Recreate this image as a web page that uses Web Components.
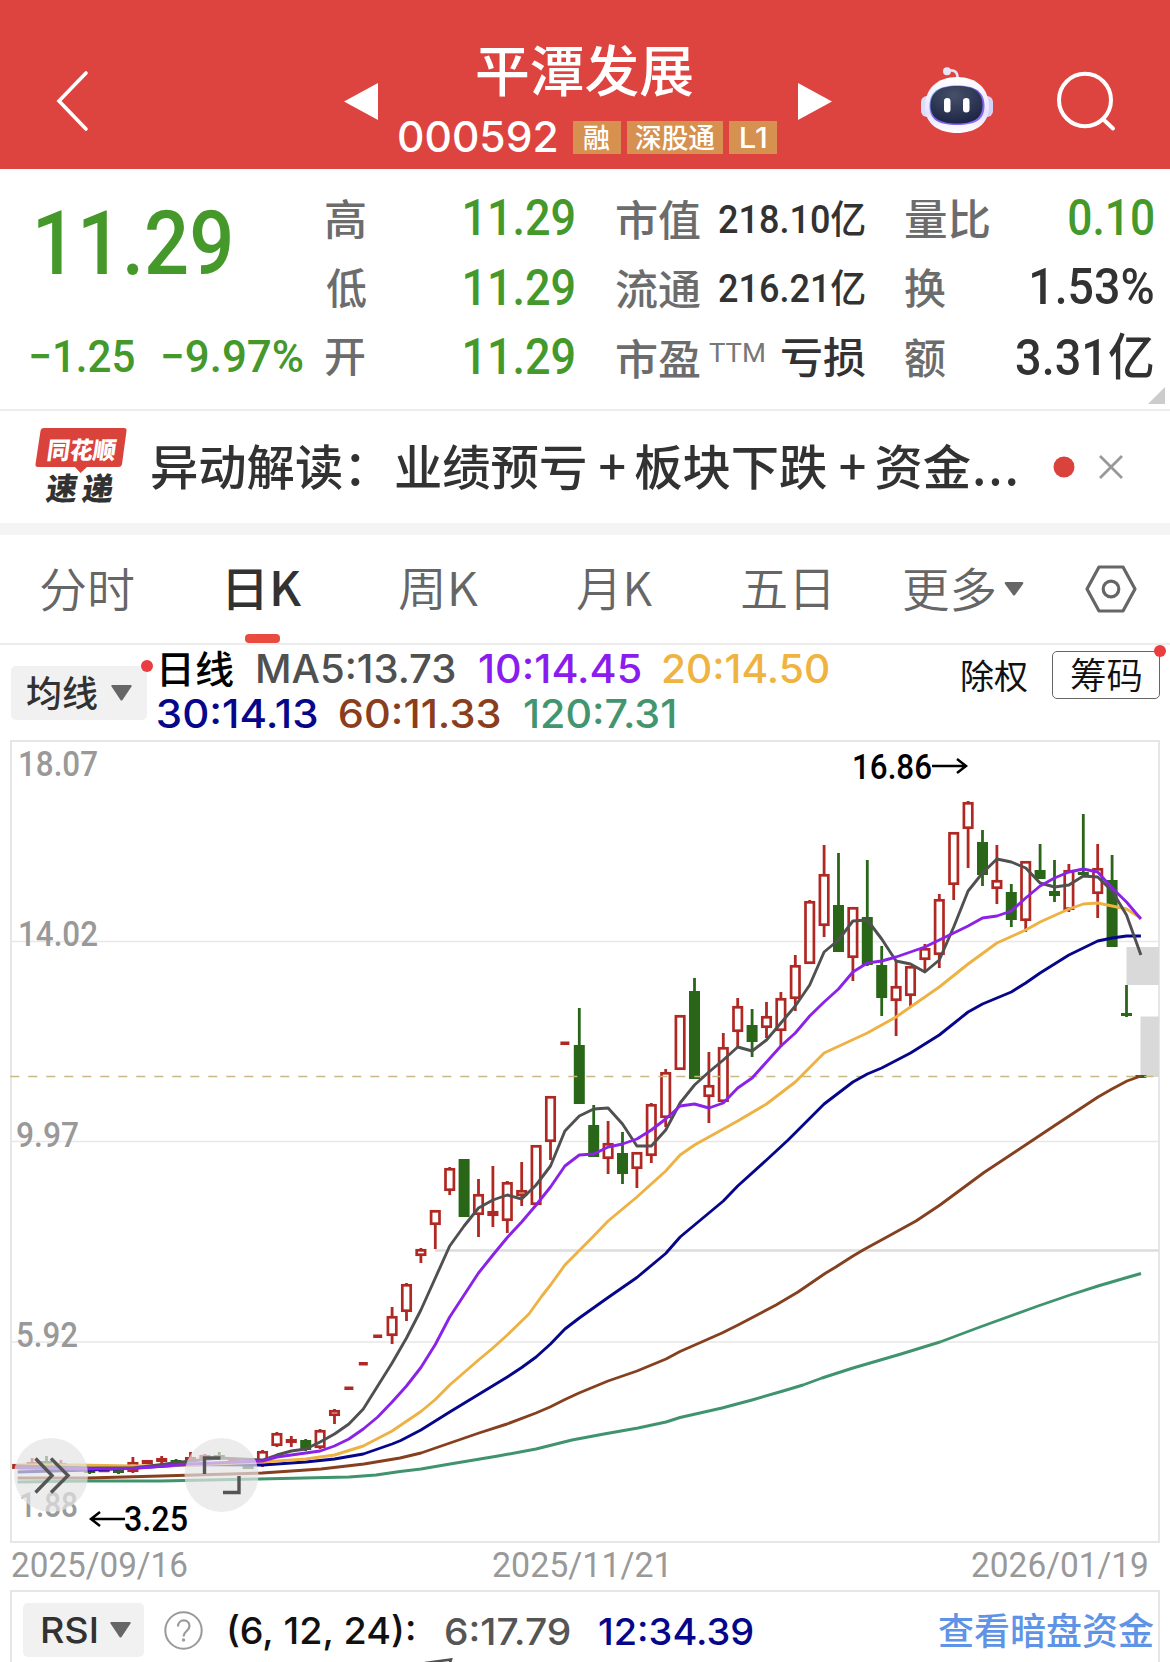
<!DOCTYPE html>
<html lang="zh-CN">
<head>
<meta charset="utf-8">
<title>平潭发展 000592</title>
<style>
  body{
    margin: 0;
    width: 1170px;
    height: 1662px;
    overflow: hidden;
    background: #fff;
    font-family: "Noto Sans CJK SC", sans-serif;
    color: #323232;
  }
</style>
</head>
<body>
<stock-page></stock-page>

<script>
const FONTS = {
  din: 'Roboto, "Noto Sans CJK SC", sans-serif',
  ui: 'Inter, "Noto Sans CJK SC", sans-serif',
  cjk: '"Noto Sans CJK SC", sans-serif'
};
const pen = document.createElement('canvas').getContext('2d');

// One line of text whose box is exactly its ink, stretched to the width "w".
class InkText extends HTMLElement{
  constructor(){
    super();
    this.attachShadow({mode: 'open'});
  }
  connectedCallback(){
    this.render();
  }
  render(){
    const size = this.getAttribute('size');
    const weight = this.getAttribute('weight') || 500;
    const text = this.getAttribute('text');
    const font = `${weight} ${size}px ${FONTS[this.getAttribute('font') || 'din']}`;
    pen.font = font;
    const m = pen.measureText(text);
    const ink = m.actualBoundingBoxLeft + m.actualBoundingBoxRight;
    const w = Number(this.getAttribute('w')) || ink;
    const h = m.actualBoundingBoxAscent + m.actualBoundingBoxDescent;
    const sx = w / ink;
    this.shadowRoot.innerHTML = /* html */ `
    <style>
      :host{ display: block; flex: none; }
      svg{ display: block; overflow: visible; }
      text{ fill: currentColor; white-space: pre; }
    </style>
    <svg width="${w}" height="${h}"><text transform="translate(${m.actualBoundingBoxLeft * sx} ${m.actualBoundingBoxAscent}) scale(${sx} 1)" style='font: ${font}'>${text}</text></svg>
    `
  }
}
customElements.define('ink-text', InkText);

class StockTag extends HTMLElement{
  constructor(){
    super();
    this.attachShadow({mode: 'open'});
    this.shadowRoot.innerHTML = /* html */ `
    <style>
      :host{
        display: flex;
        align-items: center;
        justify-content: center;
        flex: none;
        height: 33px;
        background: #d69050;
        color: #fff;
      }
    </style>
    <slot></slot>
    `
  }
}
customElements.define('stock-tag', StockTag);

class StockHeader extends HTMLElement{
  constructor(){
    super();
    this.attachShadow({mode: 'open'});
  }
  static get styles(){
    return /* css */ `
      :host{
        display: flex;
        align-items: center;
        box-sizing: border-box;
        height: 169px;
        padding-top: 33px;
        background: #dd4440;
        color: #fff;
      }
      svg{ display: block; flex: none; overflow: visible; }
      .back{ margin-left: 55px; }
      .prev{ margin-left: 255px; }
      .next{ margin-left: 21px; }
      .robot{ margin: -2px 0 0 89px; }
      .search{ margin-left: 63px; }
      .title{
        display: flex;
        flex-direction: column;
        justify-content: space-between;
        align-items: center;
        width: 378.5px;
        height: 110px;
        margin: -4px 0 0 20.5px;
      }
      .title > ink-text{ margin-left: -6px; }
      .code{ display: flex; align-items: center; width: 100%; gap: 6px; }
      .code > ink-text{ margin: -3px 11px 0 0; }
    `
  }
  connectedCallback(){
    this.render();
  }
  render(){
    this.shadowRoot.innerHTML = /* html */ `
    <style>${StockHeader.styles}</style>
    <svg class="back" width="34" height="60" fill="none" stroke="#fff" stroke-width="3.6" stroke-linecap="round"><path d="M31 2 4 30 31 58"/></svg>
    <svg class="prev" width="34" height="37" fill="#fff"><path d="M34 0v37L0 18.5z"/></svg>
    <div class="title">
      <ink-text font="cjk" size="55" w="216" text="平潭发展"></ink-text>
      <div class="code">
        <ink-text font="ui" size="42.5" w="157.5" text="000592"></ink-text>
        <stock-tag style="width:48px"><ink-text font="cjk" size="27" text="融"></ink-text></stock-tag>
        <stock-tag style="width:96px"><ink-text font="cjk" size="27" w="80" text="深股通"></ink-text></stock-tag>
        <stock-tag style="width:48px"><ink-text font="ui" size="28" w="25" text="L1"></ink-text></stock-tag>
      </div>
    </div>
    <svg class="next" width="34" height="37" fill="#fff"><path d="M0 0v37L34 18.5z"/></svg>
    <svg class="robot" width="72" height="66" viewBox="0 0 72 66">
      <defs>
        <linearGradient id="shell" x1="0" y1="0" x2="0" y2="1"><stop offset="0" stop-color="#fff"/><stop offset=".65" stop-color="#e8e2fb"/><stop offset="1" stop-color="#fff"/></linearGradient>
        <linearGradient id="rim" x1="0" y1="0" x2="1" y2="1"><stop offset="0" stop-color="#6fb6e8"/><stop offset=".5" stop-color="#7a5be6"/><stop offset="1" stop-color="#8a70ff"/></linearGradient>
        <radialGradient id="face" cx=".45" cy=".25" r=".8"><stop offset="0" stop-color="#465069"/><stop offset="1" stop-color="#1b2343"/></radialGradient>
      </defs>
      <path d="M27 4c6-2 10 1 9.500 8" fill="none" stroke="#e6e0f5" stroke-width="2.600"/>
      <circle cx="26" cy="4.200" r="4" fill="#e9e5f8"/>
      <rect x="0" y="29" width="12" height="21" rx="6" fill="#d9dcfa"/>
      <rect x="60" y="29" width="12" height="21" rx="6" fill="#d3d0fa"/>
      <path d="M36 10C56 10 68 22 68 40 68 57 54 66 36 66S4 57 4 40C4 22 16 10 36 10z" fill="url(#shell)"/>
      <path d="M36 18.500c18 0 27.500 6 27.500 20.500 0 13-8 19-27.500 19S8.500 52 8.500 39c0-14.500 9.500-20.500 27.500-20.500z" fill="url(#rim)"/>
      <path d="M36 19c17 0 25.500 6 25.500 19.500C61.500 51 53 56.500 36 56.500S9.500 51 9.500 38.500C9.500 25 19 19 36 19z" fill="url(#face)"/>
      <rect x="23" y="31" width="6.500" height="14.500" rx="3.200" fill="#fff"/>
      <rect x="42" y="31" width="6.500" height="14.500" rx="3.200" fill="#fff"/>
    </svg>
    <svg class="search" width="60" height="60" fill="none" stroke="#fff" stroke-width="4" stroke-linecap="round"><ellipse cx="29" cy="29" rx="26" ry="26.200"/><path d="M48.500 49.500 57 57.500"/></svg>
    `
  }
}
customElements.define('stock-header', StockHeader);

class QuoteCell extends HTMLElement{
  constructor(){
    super();
    this.attachShadow({mode: 'open'});
    this.shadowRoot.innerHTML = /* html */ `
    <style>
      :host{ display: flex; align-items: center; height: 69.600px; }
      ::slotted(.label){ margin-top: 5px; color: #6c6c6c; }
      ::slotted(.note){ margin: -7px 0 0 9px; color: #777; }
      ::slotted(.value){ margin-left: auto; }
      ::slotted(.low){ margin-top: 3px; }
      ::slotted(.down){ margin-top: 1px; color: #45982a; }
    </style>
    <slot></slot>
    `
  }
}
customElements.define('quote-cell', QuoteCell);

class QuotePanel extends HTMLElement{
  constructor(){
    super();
    this.attachShadow({mode: 'open'});
  }
  static get styles(){
    return /* css */ `
      :host{
        display: grid;
        grid-template-columns: 326px 248px 249px 248px;
        box-sizing: border-box;
        height: 242px;
        padding-top: 13px;
        border-bottom: 2px solid #ececec;
        position: relative;
      }
      .price{ color: #45982a; }
      .price > ink-text{ margin: 26.500px 0 0 38px; }
      .change{ display: flex; gap: 29px; margin: 65.500px 0 0 31px; }
      .mid{ margin-left: 42px; width: 249px; }
      .last{ margin-left: 82px; width: 248px; }
      .fold{ position: absolute; right: 5px; bottom: 5px; width: 17px; height: 17px; background: #ccc; clip-path: polygon(100% 0, 100% 100%, 0 100%); }
    `
  }
  connectedCallback(){
    this.render();
  }
  cell(label, w, value, vw, size, cls = '', note = ''){
    return /* html */ `<quote-cell>
      <ink-text class="label" font="cjk" size="42" w="${w}" text="${label}"></ink-text>${note}
      <ink-text class="value ${cls}" size="${size}" w="${vw}" text="${value}"></ink-text>
    </quote-cell>`
  }
  render(){
    this.shadowRoot.innerHTML = /* html */ `
    <style>${QuotePanel.styles}</style>
    <div class="price">
      <ink-text size="89.5" w="192" text="11.29"></ink-text>
      <div class="change"><ink-text size="45" w="103" text="−1.25"></ink-text><ink-text size="45" w="140" text="−9.97%"></ink-text></div>
    </div>
    <div>
      ${this.cell('高', 39, '11.29', 109, 50, 'down')}
      ${this.cell('低', 40, '11.29', 109, 50, 'down')}
      ${this.cell('开', 39, '11.29', 109, 50, 'down')}
    </div>
    <div class="mid">
      ${this.cell('市值', 84, '218.10亿', 146, 38.5, 'low')}
      ${this.cell('流通', 84, '216.21亿', 146, 38.5, 'low')}
      ${this.cell('市盈', 84, '亏损', 83, 42, 'low', '<ink-text class="note" size="25" weight="400" w="55" text="TTM"></ink-text>')}
    </div>
    <div class="last">
      ${this.cell('量比', 84, '0.10', 84, 50, 'down')}
      ${this.cell('换', 40, '1.53%', 121, 50)}
      ${this.cell('额', 40, '3.31亿', 137, 50)}
    </div>
    <span class="fold"></span>
    `
  }
}
customElements.define('quote-panel', QuotePanel);

class NewsBar extends HTMLElement{
  constructor(){
    super();
    this.attachShadow({mode: 'open'});
  }
  static get styles(){
    return /* css */ `
      :host{
        display: flex;
        align-items: center;
        height: 112px;
        border-bottom: 12px solid #f4f4f4;
      }
      svg{ display: block; flex: none; overflow: visible; }
      .logo{ margin-left: 34px; }
      .headline{
        display: flex;
        width: 903px;
        margin: -6px 0 0 22px;
        font-size: 48.300px;
        line-height: 72px;
        font-weight: 500;
        white-space: nowrap;
      }
      .lead{ margin-right: 2.500px; }
      .plus{ width: 47px; text-align: center; text-indent: 3px; }
      .dots{ letter-spacing: 1.800px; margin-left: 1px; }
      .close{ margin-left: 24px; }
    `
  }
  connectedCallback(){
    this.render();
  }
  render(){
    this.shadowRoot.innerHTML = /* html */ `
    <style>${NewsBar.styles}</style>
    <svg class="logo" width="94" height="80" viewBox="34 427 94 80" font-family="Noto Sans CJK SC, sans-serif" font-weight="900">
      <path d="M44 428h80q3 0 2.500 3l-4.500 33q-.5 3-3.500 3H87l-6.500 6-5.500-6H38q-3 0-2.500-3l5-33q.5-3 3.500-3z" fill="#da423c"/>
      <text transform="translate(46 458.500) skewX(-8)" font-size="24" fill="#fff" textLength="69" lengthAdjust="spacingAndGlyphs">同花顺</text>
      <text transform="translate(45 500) skewX(-8)" font-size="31" fill="#323232" textLength="67">速递</text>
    </svg>
    <div class="headline"><span class="lead">异动解读：</span><span>业绩预亏</span><span class="plus">+</span><span>板块下跌</span><span class="plus">+</span><span>资金</span><span class="dots">...</span></div>
    <svg width="22" height="22"><circle cx="11" cy="11" r="10.500" fill="#da423c"/></svg>
    <svg class="close" width="24" height="24" stroke="#999" stroke-width="2.800"><path d="M1 1 23 23M23 1 1 23"/></svg>
    `
  }
}
customElements.define('news-bar', NewsBar);

class PeriodTabs extends HTMLElement{
  constructor(){
    super();
    this.attachShadow({mode: 'open'});
  }
  static get styles(){
    return /* css */ `
      :host{
        display: flex;
        align-items: center;
        box-sizing: border-box;
        height: 110px;
        border-bottom: 2px solid #ececec;
        color: #666;
      }
      svg{ flex: none; }
      .on{ color: #323232; position: relative; }
      .on::after{
        content: "";
        position: absolute;
        left: 17px;
        bottom: -32px;
        width: 35px;
        height: 9px;
        border-radius: 4px;
        background: #e94b41;
      }
    `
  }
  connectedCallback(){
    this.render();
  }
  render(){
    const tabs = [['分时', 93, 41], ['日K', 74, 94], ['周K', 79, 97], ['月K', 75, 99], ['五日', 86, 90], ['更多', 91, 76]];
    this.shadowRoot.innerHTML = /* html */ `
    <style>${PeriodTabs.styles}</style>
    ${tabs.map(([t, w, gap], i) => `<div class="${i == 1 ? 'on' : ''}" style="margin-left:${gap}px;padding-top:${i == 1 ? 2 : 1}px"><ink-text font="cjk" size="47" weight="${i == 1 ? 500 : 350}" w="${w}" text="${t}"></ink-text></div>`).join('')}
    <svg width="20" height="14" style="margin-left:9px" fill="#666"><path d="M2 0h16q2 0 1 2l-8 11q-1 1-2 0L1 2q-1-2 1-2z"/></svg>
    <svg width="52" height="48" style="margin-left:61px" fill="none" stroke="#666" stroke-width="3.200" stroke-linejoin="round"><path d="M14 2h24l12 22-12 22H14L2 24z"/><circle cx="26" cy="24" r="7.800"/></svg>
    `
  }
}
customElements.define('period-tabs', PeriodTabs);

class PickButton extends HTMLElement{
  constructor(){
    super();
    this.attachShadow({mode: 'open'});
    this.shadowRoot.innerHTML = /* html */ `
    <style>
      :host{
        display: flex;
        align-items: center;
        box-sizing: border-box;
        flex: none;
        height: 54px;
        border-radius: 5px;
        background: #f1f1f1;
        position: relative;
        color: #323232;
      }
      svg{ margin-left: 14px; }
      :host([dot])::after{
        content: "";
        position: absolute;
        right: -6px;
        top: -6px;
        width: 12px;
        height: 12px;
        border-radius: 50%;
        background: #ea3d40;
      }
    </style>
    <slot></slot>
    <svg width="21" height="16" fill="#666"><path d="M1 0h19q1 0 .5 1.500l-9 13.500q-1 1-2 0L.5 1.500Q0 0 1 0z"/></svg>
    `
  }
}
customElements.define('pick-button', PickButton);

class MaLegend extends HTMLElement{
  constructor(){
    super();
    this.attachShadow({mode: 'open'});
  }
  static get styles(){
    return /* css */ `
      :host{ display: flex; height: 95px; }
      pick-button{ width: 136px; margin: 21px 0 0 11px; padding-left: 16px; }
      .rows{ display: flex; flex-direction: column; width: 682px; margin-left: 11px; }
      .row{ display: flex; align-items: center; height: 45px; }
      .row:first-child{ padding-top: 1px; }
      .side{ display: flex; align-items: flex-start; margin-left: 122px; color: #111; }
      .side > ink-text{ margin-top: 14px; }
      .chip{
        display: flex;
        align-items: center;
        justify-content: center;
        box-sizing: border-box;
        width: 108px;
        height: 48px;
        margin: 6px 0 0 25px;
        border: 1.500px solid #666;
        border-radius: 5px;
        position: relative;
      }
      .chip::after{
        content: "";
        position: absolute;
        right: -7px;
        top: -7px;
        width: 12px;
        height: 12px;
        border-radius: 50%;
        background: #ea3d40;
      }
    `
  }
  connectedCallback(){
    this.render();
  }
  item(text, w, gap, color){
    return `<ink-text font="ui" size="39" w="${w}" style="margin-left:${gap}px;color:${color}" text="${text}"></ink-text>`
  }
  render(){
    this.shadowRoot.innerHTML = /* html */ `
    <style>${MaLegend.styles}</style>
    <pick-button dot><ink-text font="cjk" size="36" w="70" text="均线"></ink-text></pick-button>
    <div class="rows">
      <div class="row">
        <ink-text font="cjk" size="38" w="71" style="margin-left:4px;color:#000" text="日线"></ink-text>
        ${this.item('MA5:13.73', 197, 25, '#505050')}
        ${this.item('10:14.45', 161, 24, '#8a1cf0')}
        ${this.item('20:14.50', 166, 23, '#efb341')}
      </div>
      <div class="row">
        ${this.item('30:14.13', 159, 0, '#06068b')}
        ${this.item('60:11.33', 160, 23, '#8b3d1c')}
        ${this.item('120:7.31', 151, 24, '#43956f')}
      </div>
    </div>
    <div class="side">
      <ink-text font="cjk" size="34" weight="400" w="65" text="除权"></ink-text>
      <div class="chip"><ink-text font="cjk" size="36" weight="350" w="70" text="筹码"></ink-text></div>
    </div>
    `
  }
}
customElements.define('ma-legend', MaLegend);

// kind, high, body top, body bottom, low, as heights on the plot
const CANDLES = `
r 1464 1464 1469 1469|r 1458 1462 1466 1466|g 1456 1461 1466 1466|r 1460 1463 1466 1466|r 1465 1466 1469 1469
g 1469 1470 1473 1474|r 1468 1469 1471 1472|g 1469 1470 1473 1474|r 1457 1462 1472 1473|r 1460 1460 1464 1464
r 1456 1458 1462 1464|g 1459 1460 1463 1463|r 1452 1457 1461 1461|r 1454 1455 1459 1459|g 1452 1455 1459 1459
r 1460 1460 1464 1464|g 1464 1465 1469 1469|r 1450 1451 1466 1467|r 1432 1433 1446 1447|r 1436 1439 1443 1447
g 1439 1440 1450 1451|r 1429 1430 1448 1449|r 1409 1410 1416 1424|d 1388|d 1363.500
d 1336|r 1307 1316 1336 1344|r 1283 1284 1312 1321|r 1248 1249 1256 1263|r 1210 1210 1225 1249
r 1167 1168 1191 1195|g 1159 1159 1217 1217|r 1179 1194 1215 1237|r 1166 1211 1216 1227|r 1181 1182 1221 1233
r 1162 1190 1196 1206|r 1145 1145 1205 1206|r 1096 1096 1142 1160|d 1043|g 1008 1045 1104 1104
g 1105 1125 1157 1157|r 1121 1143 1159 1174|g 1132 1153 1174 1184|r 1152 1152 1169 1188|r 1103 1104 1156 1163
r 1069 1072 1118 1127|r 1015 1015 1070 1070|g 978 991 1079 1079|r 1052 1085 1097 1123|r 1033 1047 1102 1102
r 998 1006 1032 1047|g 1009 1025 1042 1057|r 1002 1016 1028 1038|r 992 998 1031 1047|r 955 965 999 1011
r 900 901 964 964|r 845 874 926 937|g 853 905 952 952|r 907 907 958 981|g 860 917 965 966
g 946 965 998 1016|r 960 986 1001 1036|r 966 966 996 1006|r 944 948 960 971|r 894 899 955 968
r 832 832 885 900|r 801 802 829 868|g 830 842 875 886|r 845 880 889 904|g 884 892 920 927
r 861 861 921 932|g 844 870 879 879|g 860 891 896 902|r 864 870 910 912|g 814 872 875 875
r 844 868 894 918|g 855 880 947 947|g 985 1013 1016 1017|g 1075 1075 1078 1078`.trim().split(/[|\n]/);

const LINES = [
  ['#3f946d', '17.600,1482 88,1481 160,1481 259,1479 349,1477 376,1475 400,1471.500 421,1469 450,1464 498,1456 536,1449 572,1440 604,1434 638,1428 666,1422 680,1417.500 722,1408 752,1400 783,1391 803,1385 822,1378 853,1368 901,1354 940,1342 980,1327 1038,1306 1070,1295 1098,1286 1127,1277.500 1141,1273.500'],
  ['#84401f', '17.600,1478 88,1478 160,1476 262,1473 321,1469 364,1464 400,1458 421,1453 450,1443 479,1433 507,1424 536,1413 550,1407 566,1399 579,1393 608,1381 637,1371 666,1359 680,1351.500 722,1333 739,1324.500 776,1305 798,1292 825,1273.500 835,1267.500 853,1256 864,1249.500 886,1237.500 916,1221 940,1205 984,1172.500 1024,1146 1054,1126 1098,1097 1112,1089 1127,1081 1141,1076'],
];

// moving averages given as [candle index, height]
const AVERAGES = [
  ['#06068b', [[0,1472],[5,1470],[8,1468],[12,1464.5],[17,1465],[20,1462],[22,1459],[24,1454],[26,1444],[26.6,1440.500],[28,1430],[30,1412],[32,1394.500],[34,1377],[35,1367.500],[36,1357],[37,1344],[38,1329],[39,1318],[41,1297.500],[43,1277.500],[45,1253.500],[46,1237],[47,1225],[48,1213],[49,1201],[50,1186],[52,1160],[53.5,1140],[56,1104],[58,1082],[59,1074],[60,1068],[62,1053],[64,1035],[66,1012],[67,1004],[68,998],[69,992],[70,983],[71,973],[73,955],[75,941],[76,938],[77,936],[78,936]]],
  ['#edb243', [[0,1465],[4,1465],[8,1466],[12,1465],[17,1462],[20,1459],[22,1455],[24,1446],[26,1431],[28,1411.500],[29,1399.500],[30,1385],[31,1372.500],[32,1360],[33,1348],[34,1335],[35.5,1314],[36.4,1296],[37,1285],[38,1265],[39,1250.500],[40,1236],[41,1221],[43,1197],[45,1171],[46,1155],[47,1145],[50,1121],[52,1104],[54,1082],[56,1053],[59,1033],[61,1017],[64,987],[66,964],[68,943],[70,930],[71,922],[73,909],[74,904],[75,903],[76,906],[77,909],[78,918]]],
  ['#505050', [[0,1466],[5,1468],[8,1468],[12,1461],[14,1458],[17,1460],[18,1455],[19,1451],[20,1449],[21,1442],[22,1434],[23,1424],[24,1409],[25,1386],[26,1363],[27,1338],[28,1310],[29,1278],[30,1246],[31,1226],[32,1208],[33,1200],[34,1195],[35,1199],[36,1185],[37,1166],[38,1131],[39,1116],[40,1109],[41,1108],[42,1124],[43,1146],[44,1146],[45,1130],[46,1103],[47,1085],[48,1072],[49,1060],[50,1047],[51,1051],[52,1040],[53,1023],[54,1006],[55,985],[56,952],[57,940],[58,921],[59,920],[60,939],[61,961],[62,964],[63,972],[64,960],[65,927],[66,891],[67,873],[68,859],[69,862],[70,868],[71,883],[72,887],[73,885],[74,876],[75,877],[76,891],[77,915],[78,955]]],
  ['#8a22e8', [[0,1468],[5,1469],[8,1468.5],[12,1464],[17,1461],[18,1457],[19,1455],[20,1453],[21,1451],[22,1446],[23,1439],[24,1429],[25,1417],[26,1402],[27,1386],[28,1367.500],[29,1344.500],[30,1317],[31,1295],[32,1273],[33,1255],[34,1237.500],[35,1222],[36,1205],[37,1187],[38,1166],[39,1155],[40,1154],[41,1147],[42,1144],[43,1139],[44,1130],[45,1119],[46,1106],[47,1104],[48,1108],[49,1103],[50,1088],[51,1078],[52,1062],[53,1046],[54,1033],[55,1016],[56,1002],[57,989],[58,972],[59,963],[60,961],[61,957],[62,952],[63,947],[64,940],[65,933],[66,926],[67,918],[68,916],[69,911],[70,898],[71,886],[72,878],[73,872],[74,869],[75,872],[76,888],[77,902],[78,919]]],
];

class KlineChart extends HTMLElement{
  constructor(){
    super();
    this.attachShadow({mode: 'open'});
  }
  static get styles(){
    return /* css */ `
      :host{ display: block; height: 850px; }
      svg{ display: block; }
      .dates{
        display: flex;
        align-items: center;
        justify-content: space-between;
        box-sizing: border-box;
        height: 46px;
        padding: 0 23px 3px 12px;
        color: #999;
      }
    `
  }
  connectedCallback(){
    this.render();
  }
  x(i){
    return 17.7 + i * 14.4;
  }
  candle(row, i){
    const [kind, ...v] = row.split(' ');
    const [high, top, bottom, low] = v.map(Number);
    const x = this.x(i);
    if(kind == 'd') return `<rect x="${x - 4.5}" y="${high - 1.5}" width="9" height="3.500" fill="#b02823"/>`;
    if(kind == 'g') return `<path d="M${x} ${high}V${low}" stroke="#2a6618" stroke-width="2.800"/><rect x="${x - 5.5}" y="${top}" width="11" height="${bottom - top}" fill="#2a6618"/>`;
    const h = Math.max(bottom - top - 2.6, .6);
    return `<path d="M${x} ${high}V${top}M${x} ${bottom}V${low}" stroke="#b02823" stroke-width="2.800"/><rect x="${x - 4.2}" y="${top + 1.3}" width="8.400" height="${h}" fill="none" stroke="#b02823" stroke-width="2.700"/>`;
  }
  label(text, x, y, w, color = '#999', size = 35){
    return `<text x="${x}" y="${y}" font-size="${size}" fill="${color}" textLength="${w}" lengthAdjust="spacingAndGlyphs">${text}</text>`;
  }
  render(){
    const line = (color, points) => `<polyline points="${points}" fill="none" stroke="${color}" stroke-width="2.900" stroke-linejoin="round"/>`;
    this.shadowRoot.innerHTML = /* html */ `
    <style>${KlineChart.styles}</style>
    <svg width="1170" height="804" viewBox="0 740 1170 804" font-family="Roboto, sans-serif" font-weight="500">
      <rect x="11" y="741" width="1148" height="801" fill="none" stroke="#e6e6e6" stroke-width="2"/>
      <path d="M11 941.500H1159M11 1141.500H1159M11 1342H1159" stroke="#e8e8e8" stroke-width="1.600"/>
      <path d="M435 1250.500H1159" stroke="#dcdcdc" stroke-width="2.600"/>
      <path d="M1126.500 947h32.500v38h-32.500zM1140.500 1016.500H1159V1077h-18.500z" fill="#d9d9d9"/>
      ${this.label('18.07', 18, 776, 80)}${this.label('14.02', 18, 946, 80)}${this.label('9.97', 16, 1147, 63)}${this.label('5.92', 16, 1347, 62)}${this.label('1.88', 19, 1517, 59)}
      ${CANDLES.map((row, i) => this.candle(row, i)).join('')}
      <path d="M10.300 1076.500H1159" stroke="#c8b882" stroke-width="1.600" stroke-dasharray="9 9"/>
      ${LINES.map(([c, p]) => line(c, p)).join('')}
      ${AVERAGES.map(([c, p]) => line(c, p.map(([i, y]) => this.x(i) + ',' + y).join(' '))).join('')}
      ${this.label('16.86', 852, 779, 80, '#000')}${this.label('3.25', 124, 1531, 64, '#000')}
      <path d="M932 766h34M957 759l9 7-9 7M125 1519H91M100 1512l-9 7 9 7" fill="none" stroke="#000" stroke-width="2.500"/>
      <circle cx="51" cy="1475" r="37" fill="#e4e4e4" fill-opacity=".7"/>
      <circle cx="221.500" cy="1475" r="37" fill="#e4e4e4" fill-opacity=".7"/>
      <path d="M35.500 1458.500l16.500 17-16.500 17M51 1458.500l17 17-17 17M220.500 1458H204.500V1474M239 1476V1492.500H223" fill="none" stroke="#555" stroke-width="3.400"/>
    </svg>
    <div class="dates">
      <ink-text size="35.5" weight="400" w="175" text="2025/09/16"></ink-text>
      <ink-text size="35.5" weight="400" w="173" text="2025/11/21"></ink-text>
      <ink-text size="35.5" weight="400" w="175" text="2026/01/19"></ink-text>
    </div>
    `
  }
}
customElements.define('kline-chart', KlineChart);

class RsiPanel extends HTMLElement{
  constructor(){
    super();
    this.attachShadow({mode: 'open'});
  }
  static get styles(){
    return /* css */ `
      :host{
        display: flex;
        align-items: center;
        box-sizing: border-box;
        height: 80px;
        margin: 0 10px;
        padding: 0 4px 0 11px;
        border: 2px solid #e6e6e6;
        position: relative;
      }
      pick-button{ width: 121px; padding-left: 19px; }
      .help{ margin-left: 20px; }
      .link{ margin-left: auto; color: #5f93e6; }
      .curve{ position: absolute; left: 412px; top: 66px; }
    `
  }
  connectedCallback(){
    this.render();
  }
  render(){
    this.shadowRoot.innerHTML = /* html */ `
    <style>${RsiPanel.styles}</style>
    <pick-button><ink-text font="ui" size="36" w="54" text="RSI"></ink-text></pick-button>
    <svg class="help" width="39" height="39" fill="none" stroke="#999" stroke-width="2"><circle cx="19.500" cy="19.500" r="18.200"/><path d="M14 15.500c0-8 11.500-8 11.500-.5 0 5-6 5-6 10.500" stroke-width="2.200"/><circle cx="19.500" cy="29" r=".7"/></svg>
    <ink-text font="ui" size="36.5" w="186" style="margin:4px 0 0 26px;color:#111" text="(6, 12, 24):"></ink-text>
    <ink-text font="ui" size="37" w="124" style="margin:1px 0 0 31px;color:#555" text="6:17.79"></ink-text>
    <ink-text font="ui" size="37" w="154" style="margin:1px 0 0 29px;color:#06068b" text="12:34.39"></ink-text>
    <ink-text class="link" font="cjk" size="37" w="215" text="查看暗盘资金"></ink-text>
    <svg class="curve" width="30" height="8" fill="none" stroke="#505050" stroke-width="2.600"><path d="M1 5 27 1.500 25 8"/></svg>
    `
  }
}
customElements.define('rsi-panel', RsiPanel);

class StockPage extends HTMLElement{
  constructor(){
    super();
    this.attachShadow({mode: 'open'});
    this.shadowRoot.innerHTML = /* html */ `
    <style>
      :host{ display: flex; flex-direction: column; width: 1170px; }
    </style>
    <stock-header></stock-header>
    <quote-panel></quote-panel>
    <news-bar></news-bar>
    <period-tabs></period-tabs>
    <ma-legend></ma-legend>
    <kline-chart></kline-chart>
    <rsi-panel></rsi-panel>
    `
  }
}
customElements.define('stock-page', StockPage);
</script>
</body>
</html>
